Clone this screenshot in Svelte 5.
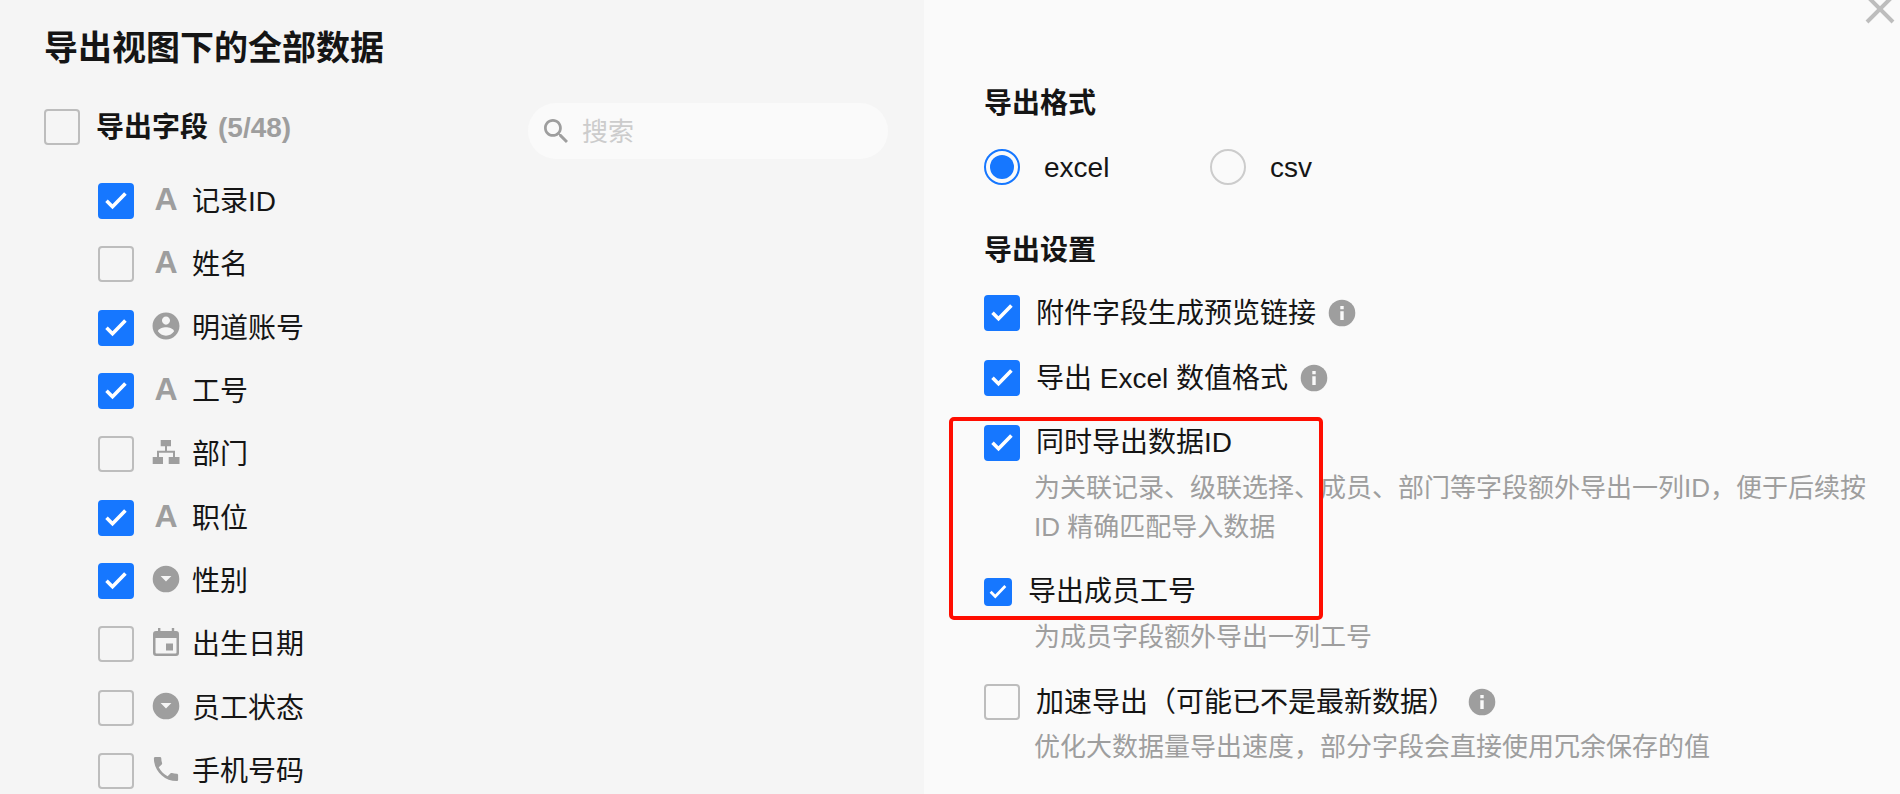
<script lang="ts">
type FieldType = 'text' | 'user' | 'department' | 'option' | 'date' | 'phone'

interface Field {
  id: string
  label: string
  type: FieldType
  checked: boolean
}

const totalFields = 48

let fields = $state<Field[]>([
  { id: 'rowid', label: '记录ID', type: 'text', checked: true },
  { id: 'name', label: '姓名', type: 'text', checked: false },
  { id: 'account', label: '明道账号', type: 'user', checked: true },
  { id: 'jobNumber', label: '工号', type: 'text', checked: true },
  { id: 'department', label: '部门', type: 'department', checked: false },
  { id: 'position', label: '职位', type: 'text', checked: true },
  { id: 'gender', label: '性别', type: 'option', checked: true },
  { id: 'birthday', label: '出生日期', type: 'date', checked: false },
  { id: 'status', label: '员工状态', type: 'option', checked: false },
  { id: 'mobile', label: '手机号码', type: 'phone', checked: false }
])

let settings = $state({
  preview: true,
  numeric: true,
  dataId: true,
  jobNumber: true,
  fast: false
})

let format = $state('excel')
let keyword = $state('')

const selectedCount = $derived(fields.filter(f => f.checked).length)
const visibleFields = $derived(fields.filter(f => f.label.includes(keyword)))

function toggleAll(e: Event) {
  const { checked } = e.currentTarget as HTMLInputElement
  fields.forEach(f => (f.checked = checked))
}
</script>

{#snippet tick()}
  <svg class="tick" viewBox="0 0 36 36" aria-hidden="true">
    <path d="M8.5 17.7l6 6L27.4 10.4" />
  </svg>
{/snippet}

{#snippet info(title: string)}
  <svg class="info" viewBox="0 0 28 28" role="img" aria-label={title}>
    <circle cx="14" cy="14" r="13.3" fill="#9e9e9e" />
    <path d="M12.3 7h3.4v3.2h-3.4zM12.3 12.2h3.4V21h-3.4z" fill="#fafafa" />
  </svg>
{/snippet}

{#snippet fieldIcon(type: FieldType)}
  {#if type === 'text'}
    <span class="field-icon letter" aria-hidden="true">A</span>
  {:else if type === 'user'}
    <svg class="field-icon" viewBox="1.6 1.6 20.8 20.8" aria-hidden="true">
      <path d="M12 2C6.48 2 2 6.48 2 12s4.48 10 10 10 10-4.48 10-10S17.52 2 12 2zm0 3c1.66 0 3 1.34 3 3s-1.34 3-3 3-3-1.34-3-3 1.34-3 3-3zm0 14.2c-2.5 0-4.71-1.28-6-3.22.03-1.99 4-3.08 6-3.08 1.99 0 5.97 1.09 6 3.08-1.29 1.94-3.5 3.22-6 3.22z" />
    </svg>
  {:else if type === 'department'}
    <svg class="field-icon" viewBox="0 0 28 28" aria-hidden="true">
      <path d="M8.7 2H19v6.3h-4V12.7h8V19h4.5v7H16.7v-7H21v-4.3H7V19h4v7H.7v-7H5v-6.3h8V8.3H8.7z" />
    </svg>
  {:else if type === 'option'}
    <svg class="field-icon" viewBox="0 0 28 28" aria-hidden="true">
      <path fill-rule="evenodd" d="M14 .7a13.3 13.3 0 1 0 0 26.6 13.3 13.3 0 0 0 0-26.6zM8.6 11h10.8L14 16.6z" />
    </svg>
  {:else if type === 'date'}
    <svg class="field-icon" viewBox="0 0 28 28" aria-hidden="true">
      <path fill-rule="evenodd" d="M6 0h2.4v3h11.4V0h2.4v3H24a3 3 0 0 1 3 3v19a3 3 0 0 1-3 3H4a3 3 0 0 1-3-3V6a3 3 0 0 1 3-3h2zM3.5 10v14.5a1 1 0 0 0 1 1h19a1 1 0 0 0 1-1V10zM14 15.6h7v6.8h-7z" />
    </svg>
  {:else}
    <svg class="field-icon" viewBox="1.6 1.6 20.8 20.8" aria-hidden="true">
      <path d="M6.62 10.79c1.44 2.83 3.76 5.14 6.59 6.59l2.2-2.2c.27-.27.67-.36 1.02-.24 1.12.37 2.33.57 3.57.57.55 0 1 .45 1 1V20c0 .55-.45 1-1 1-9.39 0-17-7.61-17-17 0-.55.45-1 1-1h3.5c.55 0 1 .45 1 1 0 1.25.2 2.45.57 3.57.11.35.03.74-.25 1.02l-2.2 2.2z" />
    </svg>
  {/if}
{/snippet}

<div class="export-dialog">
  <section class="fields-pane">
    <h1>导出视图下的全部数据</h1>

    <div class="fields-header">
      <label class="select-all">
        <span class="checkbox">
          <input type="checkbox" checked={selectedCount === totalFields} onchange={toggleAll} />
          {@render tick()}
        </span>
        <span class="text">导出字段</span>
        <span class="text count">({selectedCount}/{totalFields})</span>
      </label>
      <label class="search">
        <svg viewBox="3 3 17.5 17.5" aria-hidden="true">
          <path d="M15.5 14h-.79l-.28-.27C15.41 12.59 16 11.11 16 9.5 16 5.91 13.09 3 9.5 3S3 5.91 3 9.5 5.91 16 9.5 16c1.61 0 3.09-.59 4.23-1.57l.27.28v.79l5 4.99L20.49 19l-4.99-5zm-6 0C7.01 14 5 11.99 5 9.5S7.01 5 9.5 5 14 7.01 14 9.5 11.99 14 9.5 14z" />
        </svg>
        <input type="text" placeholder="搜索" aria-label="搜索" bind:value={keyword} />
      </label>
    </div>

    <ul class="field-list">
      {#each visibleFields as field (field.id)}
        <li>
          <label>
            <span class="checkbox">
              <input type="checkbox" bind:checked={field.checked} />
              {@render tick()}
            </span>
            {@render fieldIcon(field.type)}
            <span class="text">{field.label}</span>
          </label>
        </li>
      {/each}
    </ul>
  </section>

  <section class="settings-pane">
    <button class="close" type="button" aria-label="关闭">
      <svg viewBox="0 0 32 32" aria-hidden="true">
        <path d="M3 3l26 26M29 3L3 29" />
      </svg>
    </button>

    <h2>导出格式</h2>
    <div class="formats">
      {#each ['excel', 'csv'] as value (value)}
        <label class="format">
          <input type="radio" name="format" {value} bind:group={format} />
          <span class="text">{value}</span>
        </label>
      {/each}
    </div>

    <h2 class="settings-title">导出设置</h2>
    <div class="option">
      <label>
        <span class="checkbox">
          <input type="checkbox" bind:checked={settings.preview} />
          {@render tick()}
        </span>
        <span class="text">附件字段生成预览链接</span>
      </label>
      {@render info('附件字段生成预览链接')}
    </div>
    <div class="option">
      <label>
        <span class="checkbox">
          <input type="checkbox" bind:checked={settings.numeric} />
          {@render tick()}
        </span>
        <span class="text">导出 Excel 数值格式</span>
      </label>
      {@render info('导出 Excel 数值格式')}
    </div>

    <div class="highlighted">
      <div class="option">
        <label>
          <span class="checkbox">
            <input type="checkbox" bind:checked={settings.dataId} />
            {@render tick()}
          </span>
          <span>同时导出数据ID</span>
        </label>
      </div>
      <p>为关联记录、级联选择、成员、部门等字段额外导出一列ID，便于后续按 ID 精确匹配导入数据</p>
      <div class="option">
        <label>
          <span class="checkbox small">
            <input type="checkbox" bind:checked={settings.jobNumber} />
            {@render tick()}
          </span>
          <span>导出成员工号</span>
        </label>
      </div>
      <p>为成员字段额外导出一列工号</p>
      <div class="outline"></div>
    </div>

    <div class="option">
      <label>
        <span class="checkbox">
          <input type="checkbox" bind:checked={settings.fast} />
          {@render tick()}
        </span>
        <span class="text">加速导出（可能已不是最新数据）</span>
      </label>
      {@render info('加速导出')}
    </div>
    <p>优化大数据量导出速度，部分字段会直接使用冗余保存的值</p>
  </section>
</div>

<style>
  :global(body) {
    margin: 0;
  }

  .export-dialog {
    display: grid;
    grid-template-columns: 924fr 976fr;
    min-height: 100vh;
    font-family: 'Liberation Sans', 'Noto Sans CJK SC', sans-serif;
    font-size: 28px;
    line-height: 36px;
    color: #151515;
  }

  .fields-pane {
    display: flex;
    flex-direction: column;
    box-sizing: border-box;
    padding: 24px 36px 5px 44px;
    background: #f5f5f5;
  }

  .settings-pane {
    position: relative;
    box-sizing: border-box;
    padding: 84px 30px 0 60px;
    background: #fafafa;
    overflow: hidden;
  }

  h1 {
    margin: 0 0 31px;
    font-size: 34px;
    font-weight: 700;
    line-height: 48px;
  }

  h2 {
    margin: 0;
    font-size: 28px;
    font-weight: 700;
    line-height: 40px;
  }

  label {
    display: flex;
    align-items: center;
    cursor: pointer;
  }

  .text {
    padding-top: 2px;
    line-height: 34px;
  }

  .checkbox {
    position: relative;
    flex: none;
    width: 36px;
    height: 36px;
  }

  .checkbox.small {
    width: 28px;
    height: 28px;
  }

  .checkbox input {
    appearance: none;
    display: block;
    box-sizing: border-box;
    width: 100%;
    height: 100%;
    margin: 0;
    border: 2px solid #bdbdbd;
    border-radius: 4px;
  }

  .checkbox input:checked {
    border-color: #1677ff;
    background: #1677ff;
  }

  .tick {
    display: none;
    position: absolute;
    inset: 0;
    fill: none;
    stroke: #fff;
    stroke-width: 3.6;
    pointer-events: none;
  }

  .checkbox input:checked + .tick {
    display: block;
  }

  .fields-header {
    display: flex;
    justify-content: space-between;
    height: 56px;
  }

  .select-all {
    padding-bottom: 8px;
    font-weight: 700;
  }

  .select-all .checkbox {
    margin-right: 16px;
  }

  .count {
    margin-left: 10px;
    color: #9e9e9e;
  }

  .search {
    box-sizing: border-box;
    width: 360px;
    padding: 0 16px;
    border-radius: 28px;
    background: #fafafa;
  }

  .search svg {
    flex: none;
    width: 24px;
    height: 24px;
    margin-right: 14px;
    fill: #9e9e9e;
  }

  .search input {
    flex: 1;
    min-width: 0;
    padding: 2px 0 0;
    border: none;
    outline: none;
    background: none;
    font: inherit;
    font-size: 26px;
    color: inherit;
  }

  .search input::placeholder {
    color: #ccc;
  }

  .field-list {
    display: flex;
    flex: 1;
    flex-direction: column;
    justify-content: space-between;
    margin: 24px 0 0;
    padding: 0 0 0 54px;
    list-style: none;
  }

  .field-icon {
    flex: none;
    width: 28px;
    height: 28px;
    margin: 0 12px 4px 18px;
    fill: #9e9e9e;
  }

  .letter {
    font-size: 32px;
    font-weight: 700;
    line-height: 28px;
    text-align: center;
    color: #9e9e9e;
  }

  .close {
    position: absolute;
    top: -7px;
    right: 4px;
    width: 32px;
    height: 32px;
    padding: 0;
    border: none;
    background: none;
    cursor: pointer;
  }

  .close svg {
    display: block;
    fill: none;
    stroke: #bdbdbd;
    stroke-width: 4;
  }

  .formats {
    display: flex;
    margin: 25px 0 46px;
  }

  .format {
    gap: 24px;
    min-width: 226px;
  }

  .format input {
    appearance: none;
    box-sizing: border-box;
    width: 36px;
    height: 36px;
    margin: 0;
    padding: 4px;
    border: 2px solid #ccc;
    border-radius: 50%;
  }

  .format input:checked {
    border-color: #1677ff;
    background: #1677ff content-box;
  }

  .settings-title {
    margin-bottom: 24px;
  }

  .option {
    display: flex;
    align-items: center;
    gap: 12px;
    min-height: 36px;
  }

  .option label {
    gap: 16px;
  }

  .option + .option,
  .highlighted {
    margin-top: 29px;
  }

  p + .option,
  .highlighted + .option {
    margin-top: 27px;
  }

  .info {
    flex: none;
    width: 28px;
    height: 28px;
  }

  p {
    margin: 8px 0 0 50px;
    font-size: 26px;
    line-height: 39px;
    color: #9e9e9e;
  }

  .highlighted {
    position: relative;
  }

  .outline {
    position: absolute;
    top: -8px;
    left: -35px;
    box-sizing: border-box;
    width: 374px;
    height: 203px;
    border: 4px solid #ff0d00;
    border-radius: 5px;
    pointer-events: none;
  }
</style>
